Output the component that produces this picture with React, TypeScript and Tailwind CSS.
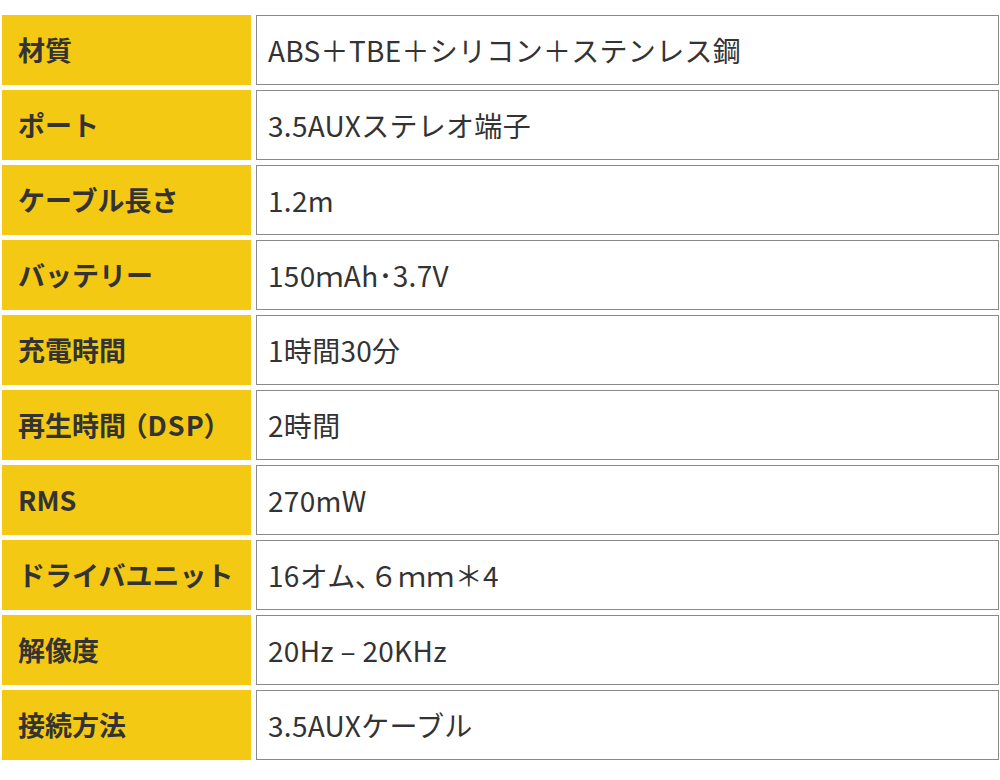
const rows: [string, string][] = [
  ["材質", "ABS＋TBE＋シリコン＋ステンレス鋼"],
  ["ポート", "3.5AUXステレオ端子"],
  ["ケーブル長さ", "1.2m"],
  ["バッテリー", "150ｍAh･3.7V"],
  ["充電時間", "1時間30分"],
  ["再生時間（DSP）", "2時間"],
  ["RMS", "270mW"],
  ["ドライバユニット", "16オム､６ｍｍ＊4"],
  ["解像度", "20Hz – 20KHz"],
  ["接続方法", "3.5AUXケーブル"],
];

function Label({ text }: { text: string }) {
  if (!text.includes("（")) return <>{text}</>;
  const [head, tail] = text.split("（");
  return (
    <>
      {head}
      <span className="ml-[7px] tracking-[1px] [font-feature-settings:'palt']">（{tail}</span>
    </>
  );
}

export default function App() {
  return (
    <div
      className="w-[1000px] h-[780px] bg-white pt-[15px] pl-[2px] pr-[1px]"
      style={{ fontFamily: '"Noto Sans CJK JP", "Noto Sans", sans-serif' }}
    >
      <div className="flex flex-col gap-[5px]">
        {rows.map(([label, value]) => (
          <div key={label} className="flex h-[70px] gap-[5px]">
            <div className="w-[249px] shrink-0 bg-[#f3c914] flex items-center pl-4 text-[27px] font-bold text-[#333]">
              <Label text={label} />
            </div>
            <div className="flex-1 border border-[#8a8a8a] flex items-center pl-[11px] text-[28px] text-[#333] tracking-[0.3px]">
              {value}
            </div>
          </div>
        ))}
      </div>
    </div>
  );
}
